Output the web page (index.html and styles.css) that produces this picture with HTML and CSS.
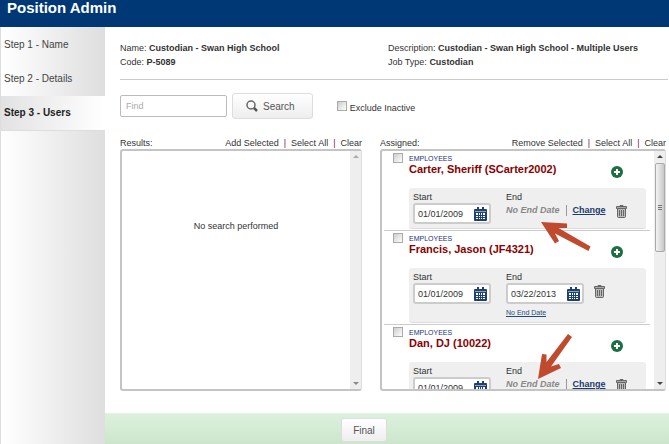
FILE: index.html
```html
<!DOCTYPE html>
<html lang="en">
<head>
<meta charset="utf-8">
<title>Position Admin</title>
<link rel="stylesheet" href="styles.css">
</head>
<body>
<svg class="defs" aria-hidden="true">
  <symbol id="calendar" viewBox="0 0 13 14">
    <path d="M1 2h11q1 0 1 1v10q0 1-1 1H1q-1 0-1-1V3q0-1 1-1z" fill="#1d3f72"/>
    <path d="M3 0h2v3H3zM8 0h2v3H8z" fill="#1d3f72"/>
    <path d="M1 4h11v1H1z" fill="#8ea2c0"/>
    <path d="M2 6h2v2H2zM5 6h1v2H5zM7 6h1v2H7zM9 6h2v2H9zM2 9h2v1H2zM5 9h1v1H5zM7 9h1v1H7zM9 9h2v1H9zM2 11h2v1H2zM5 11h1v1H5zM7 11h1v1H7zM9 11h2v1H9z" fill="#fff"/>
  </symbol>
  <symbol id="trash" viewBox="0 0 11 13">
    <path d="M4 1.5V.5h3v1" fill="none" stroke="#666"/>
    <path d="M.5 1.5h10v2H.5z" fill="#aaa" stroke="#666"/>
    <path d="M1.500 3.500h8v8q0 1-1 1h-6q-1 0-1-1z" fill="#bbb" stroke="#666"/>
    <path d="M3.500 5v6M5.500 5v6M7.500 5v6" stroke="#666"/>
  </symbol>
  <symbol id="plus" viewBox="0 0 12 12">
    <circle cx="6" cy="6" r="6" fill="#1c6f42"/>
    <path d="M6 3v6M3 6h6" stroke="#fff" stroke-width="2"/>
  </symbol>
  <symbol id="pointer" viewBox="0 0 50 29">
    <path d="M0 0L26 1.500 26 6 17.500 6 49.500 24.500 47.500 29 14 11.500 18 19 14 21.500z" fill="#c04a2e"/>
  </symbol>
  <symbol id="pointer-down" viewBox="0 0 36 46">
    <path d="M1 45L5 20 9.500 20.500 9.500 28 31 0 35 3 14 32.500 22 30 24 34z" fill="#c04a2e"/>
  </symbol>
</svg>

<div class="page">
  <header class="titlebar"><h1>Position Admin</h1></header>
  <nav class="steps">
    <a href="#name">Step 1 - Name</a>
    <a href="#details">Step 2 - Details</a>
    <a href="#users" class="active">Step 3 - Users</a>
  </nav>
  <main class="content">
    <section class="summary">
      <div>Name: <b>Custodian - Swan High School</b><br>Code: <b>P-5089</b></div>
      <div>Description: <b>Custodian - Swan High School - Multiple Users</b><br>Job Type: <b>Custodian</b></div>
    </section>
    <form class="search">
      <input class="find" type="text" placeholder="Find" aria-label="Find">
      <button class="button search-button" type="button">
        <svg width="12" height="12" viewBox="0 0 12 12"><circle cx="5" cy="5" r="4" fill="none" stroke="#666" stroke-width="1.500"/><path d="M8 8l3 3" stroke="#555" stroke-width="2.500"/></svg>
        Search
      </button>
      <input class="check" type="checkbox" id="inactive">
      <label for="inactive">Exclude Inactive</label>
    </form>
    <div class="lists">
      <section class="list">
        <div class="list-head"><span>Results:</span><span class="actions"><a href="#add">Add Selected</a><i>|</i><a href="#all">Select All</a><i>|</i><a href="#clear">Clear</a></span></div>
        <div class="panel">
          <p class="empty">No search performed</p>
          <div class="scrollbar idle"><span class="up"></span><span class="down"></span></div>
        </div>
      </section>
      <section class="list">
        <div class="list-head"><span>Assigned:</span><span class="actions"><a href="#remove">Remove Selected</a><i>|</i><a href="#all2">Select All</a><i>|</i><a href="#clear2">Clear</a></span></div>
        <div class="panel">
          <div class="people">
            <article class="person">
              <input class="check" type="checkbox" aria-label="Carter, Sheriff">
              <div class="person-body">
                <div class="group">EMPLOYEES</div>
                <div class="name-row"><h2>Carter, Sheriff (SCarter2002)</h2><button class="icon" type="button" aria-label="Add"><svg width="12" height="12"><use href="#plus"/></svg></button></div>
                <div class="dates">
                  <div class="field"><label for="s1">Start</label><div class="date"><input id="s1" type="text" value="01/01/2009"><svg width="13" height="14"><use href="#calendar"/></svg></div></div>
                  <div class="field"><span class="label">End</span><div class="open"><em>No End Date</em><a href="#change">Change</a></div></div>
                  <button class="icon" type="button" aria-label="Delete"><svg width="11" height="13"><use href="#trash"/></svg></button>
                </div>
              </div>
              <svg class="pointer" width="50" height="29"><use href="#pointer"/></svg>
            </article>
            <article class="person">
              <input class="check" type="checkbox" aria-label="Francis, Jason">
              <div class="person-body">
                <div class="group">EMPLOYEES</div>
                <div class="name-row"><h2>Francis, Jason (JF4321)</h2><button class="icon" type="button" aria-label="Add"><svg width="12" height="12"><use href="#plus"/></svg></button></div>
                <div class="dates">
                  <div class="field"><label for="s2">Start</label><div class="date"><input id="s2" type="text" value="01/01/2009"><svg width="13" height="14"><use href="#calendar"/></svg></div></div>
                  <div class="field"><label for="e2">End</label><div class="date"><input id="e2" type="text" value="03/22/2013"><svg width="13" height="14"><use href="#calendar"/></svg></div><a class="no-end" href="#noend">No End Date</a></div>
                  <button class="icon" type="button" aria-label="Delete"><svg width="11" height="13"><use href="#trash"/></svg></button>
                </div>
              </div>
            </article>
            <article class="person">
              <input class="check" type="checkbox" aria-label="Dan, DJ">
              <div class="person-body">
                <div class="group">EMPLOYEES</div>
                <div class="name-row"><h2>Dan, DJ (10022)</h2><button class="icon" type="button" aria-label="Add"><svg width="12" height="12"><use href="#plus"/></svg></button></div>
                <div class="dates">
                  <div class="field"><label for="s3">Start</label><div class="date"><input id="s3" type="text" value="01/01/2009"><svg width="13" height="14"><use href="#calendar"/></svg></div></div>
                  <div class="field"><span class="label">End</span><div class="open"><em>No End Date</em><a href="#change3">Change</a></div></div>
                  <button class="icon" type="button" aria-label="Delete"><svg width="11" height="13"><use href="#trash"/></svg></button>
                </div>
              </div>
              <svg class="pointer pointer-down" width="36" height="46"><use href="#pointer-down"/></svg>
            </article>
          </div>
          <div class="scrollbar"><span class="up"></span><span class="thumb"></span><span class="down"></span></div>
        </div>
      </section>
    </div>
  </main>
  <footer class="footer"><button class="button" type="button">Final</button></footer>
</div>
</body>
</html>
```
FILE: styles.css
```css
* { box-sizing: border-box; }
body, h1, h2, p { margin: 0; }
body, input, button { font-family: "Liberation Sans", Arial, sans-serif; font-size: 9px; color: #333; }
a { color: inherit; text-decoration: none; }
.defs { display: none; }
svg { display: block; flex: none; }

.page {
  display: grid;
  grid-template: auto minmax(0, 1fr) auto / 105px minmax(0, 1fr);
  height: 100vh;
  background: #fff;
}
.titlebar { grid-column: 1 / -1; height: 27px; padding-left: 7px; background: #003876; }
h1 { font-size: 15px; line-height: 16px; color: #fff; }

.steps {
  grid-row: 2 / 4;
  padding-top: 1px;
  border-left: 1px solid #ddd;
  background: linear-gradient(90deg, #fff, #dedede);
}
.steps a { display: block; padding-left: 3px; font-size: 10px; line-height: 34px; color: #444; }
.steps .active {
  border-bottom: 1px solid #ddd;
  font-weight: bold;
  color: #222;
  background: linear-gradient(90deg, #e2e2e2, #fff);
}

.content { display: flex; flex-direction: column; padding: 14px 3px 22px 15px; min-height: 0; }
.summary {
  display: grid;
  grid-template-columns: 268fr 280fr;
  margin-right: -2px;
  padding-bottom: 10px;
  border-bottom: 1px solid #ccc;
  line-height: 14px;
}
.search { display: flex; align-items: center; margin-top: 13px; }
.find { width: 107px; height: 22px; padding: 0 5px; border: 1px solid #bbb; border-radius: 2px; }
.find::placeholder { color: #aaa; }
.button {
  height: 26px;
  padding: 0 11px;
  border: 1px solid #ddd;
  border-radius: 3px;
  background: linear-gradient(#fff, #eee);
  font-size: 10px;
  color: #555;
}
.search-button { display: flex; align-items: center; gap: 5px; margin: 0 24px 0 5px; padding: 0 17px 0 13px; }
.check {
  appearance: none;
  flex: none;
  width: 10px;
  height: 10px;
  margin: 0;
  border: 1px solid #aaa;
  background: linear-gradient(135deg, #ccc, #fff);
}
.search label { margin-left: 3px; padding-top: 3px; }

.lists {
  display: grid;
  grid-template: minmax(0, 1fr) / 242fr 286fr;
  gap: 18px;
  flex: 1;
  min-height: 0;
  margin-top: 19px;
}
.list { display: flex; flex-direction: column; min-width: 0; min-height: 0; }
.list-head { display: flex; justify-content: space-between; line-height: 11px; }
.actions { display: flex; gap: 5px; }
.actions i { font-style: normal; color: #724; }
.panel {
  display: flex;
  flex: 1;
  min-height: 0;
  border: 2px solid #c4c4c4;
  border-right: 1px solid #ddd;
  border-radius: 3px;
  overflow: hidden;
}
.empty { flex: 1; padding-top: 70px; text-align: center; }
.scrollbar {
  display: flex;
  flex-direction: column;
  align-items: center;
  width: 11px;
  padding: 4px 0;
  background: #eee;
}
.up, .down { border: 3px solid transparent; }
.up { border-top: 0; border-bottom-color: #444; }
.down { border-bottom: 0; border-top-color: #444; margin-top: auto; }
.idle .up { border-bottom-color: #aaa; }
.idle .down { border-top-color: #888; }
.thumb {
  width: 10px;
  height: 89px;
  margin-top: 5px;
  border: 1px solid #aaa;
  border-radius: 2px;
  background:
    repeating-linear-gradient(#777 0 1px, #ddd 1px 2px) center / 4px 5px no-repeat,
    linear-gradient(90deg, #f4f4f4, #c8c8c8);
}

.people { flex: 1; min-width: 0; overflow: hidden; }
.person {
  position: relative;
  display: flex;
  gap: 6px;
  margin: 0 4px 0 2px;
  padding: 2px 4px 1px 9px;
  border-bottom: 1px solid #ccc;
}
.person-body { flex: 1; min-width: 0; }
.group { padding-top: 1px; font-size: 7px; line-height: 9px; color: #1d3080; }
.name-row { display: flex; align-items: flex-start; justify-content: space-between; height: 25px; padding-right: 23px; }
h2 { font-size: 11px; line-height: 13px; color: #8b0000; }
.icon { display: block; padding: 0; border: 0; background: none; }
.dates {
  display: flex;
  align-items: flex-start;
  padding: 4px;
  border-bottom: 1px solid #ddd;
  border-radius: 3px;
  background: #efefef;
}
.field { display: flex; flex-direction: column; margin-right: 15px; }
.field label, .label { line-height: 11px; }
.date {
  display: flex;
  align-items: center;
  width: 78px;
  height: 21px;
  padding: 0 2px 0 3px;
  border: 2px solid #ccc;
  border-radius: 3px;
  background: #fff;
}
.date input { flex: 1; min-width: 0; padding: 0; border: 0; background: none; }
.open { display: flex; align-items: center; padding-top: 2px; line-height: 11px; }
.open em { padding-right: 6px; border-right: 1px solid #999; font-weight: bold; color: #888; }
.open a { margin-left: 6px; font-weight: bold; color: #1a3c6e; text-decoration: underline; }
.no-end { margin-top: 4px; font-size: 7px; line-height: 10px; color: #1a4c7e; text-decoration: underline; }
.dates .icon { margin: 13px 0 0 -5px; }
.name-row .icon { margin-top: 3px; }
.pointer { position: absolute; left: 157px; top: 71px; z-index: 1; }
.pointer-down { left: 153px; top: 9px; }

.footer {
  grid-column: 2;
  padding: 4px 46px 2px 0;
  border-top: 1px solid #e8f0e8;
  background: linear-gradient(#dcf1dc, #cde5cd);
}
.footer .button { display: block; height: 24px; margin: 0 auto; }
```
